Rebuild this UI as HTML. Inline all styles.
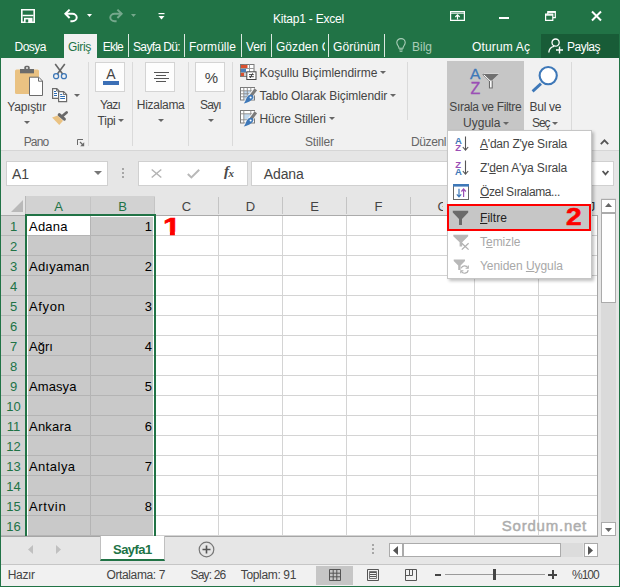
<!DOCTYPE html>
<html lang="tr"><head>
<meta charset="utf-8">
<title>Kitap1 - Excel</title>
<style>
html,body{margin:0;padding:0;}
body{width:620px;height:587px;position:relative;overflow:hidden;background:#217346;font-family:"Liberation Sans",sans-serif;font-size:12px;color:#444;}
.a{position:absolute;}
.t{position:absolute;white-space:nowrap;font-size:12px;color:#444;}
.w{color:#fff;}
.g{color:#666;}
svg{position:absolute;overflow:visible;}
.sep{position:absolute;top:34px;height:23px;width:1px;background:#dbe8e0;}
.gsep{position:absolute;top:62px;height:84px;width:1px;background:#dadada;}
.bigbox{position:absolute;top:62px;width:28px;height:28px;background:#fdfdfd;border:1px solid #d4d4d4;}
.arr{position:absolute;width:0;height:0;border-left:3px solid transparent;border-right:3px solid transparent;border-top:3px solid #666;}
.ch{position:absolute;top:197px;height:17px;background:#e6e6e6;}
.cell{position:absolute;}
.hl{left:26px;width:571px;height:1px;background:#d4d4d4;}
.hls{left:28px;width:125px;height:1px;background:#b4b4b4;}
.vl{top:216px;width:1px;height:320px;background:#d4d4d4;}
.hd{font-size:13px;text-align:center;line-height:15px;}
.c{font-size:13px;color:#000;}
.mi{font-size:9.5px;font-weight:bold;line-height:10px;}
u{text-decoration:underline;}
</style>
</head>
<body>
<!-- title + tabs -->
<div class="a" style="left:0;top:0;width:620px;height:58px;background:#217346;"></div>
<div class="a" style="left:64px;top:34px;width:33px;height:24px;background:#f1f1f1;"></div>
<div class="a" style="left:541px;top:34px;width:78px;height:24px;background:#185c37;"></div>
<span class="t w" style="letter-spacing: -0.22px; left: 273px; top: 12.8px; line-height: 12px;">Kitap1 - Excel</span>
<span class="t w" style="letter-spacing: -0.5px; left: 14.5px; top: 40.8px; line-height: 12px;">Dosya</span>
<span class="t" style="color: rgb(33, 115, 70); letter-spacing: -0.37px; left: 68px; top: 40.8px; line-height: 12px;">Giriş</span>
<span class="t w" style="letter-spacing: -0.76px; left: 102.7px; top: 40.8px; line-height: 12px;">Ekle</span>
<span class="t w" style="letter-spacing: -0.63px; left: 133px; top: 40.8px; line-height: 12px;">Sayfa Dü:</span>
<span class="t w" style="letter-spacing: 0.04px; left: 189px; top: 40.8px; line-height: 12px;">Formülle</span>
<span class="t w" style="letter-spacing: -0.17px; left: 246px; top: 40.8px; line-height: 12px;">Veri</span>
<span class="a" style="left:276px;top:36px;width:49px;height:20px;overflow:hidden;"><span class="t w" style="letter-spacing: 0.04px; left: 0px; top: 4.8px; line-height: 12px;">Gözden G</span></span>
<span class="a" style="left:333px;top:36px;width:47px;height:20px;overflow:hidden;"><span class="t w" style="letter-spacing: 0.07px; left: 0px; top: 4.8px; line-height: 12px;">Görünüm</span></span>
<span class="t" style="color: rgb(169, 205, 184); letter-spacing: 0px; left: 412px; top: 40.8px; line-height: 12px;">Bilg</span>
<span class="t w" style="letter-spacing: 0.15px; left: 472px; top: 40.8px; line-height: 12px;">Oturum Aç</span>
<span class="t w" style="letter-spacing: -0.51px; left: 567px; top: 40.8px; line-height: 12px;">Paylaş</span>
<div class="sep" style="left:128px"></div>
<div class="sep" style="left:184px"></div>
<div class="sep" style="left:241px"></div>
<div class="sep" style="left:271px"></div>
<div class="sep" style="left:328px"></div>
<div class="sep" style="left:384px"></div>

<!-- title icons -->
<svg style="left:21px;top:9px" width="14" height="14" viewBox="0 0 14 14"><path d="M0.800 0.800H13.200V13.200H0.800Z" fill="none" stroke="#fff" stroke-width="1.600"></path><path d="M1.500 6.500H12.500" stroke="#fff" stroke-width="1.500"></path><rect x="3" y="8.800" width="8.500" height="4.400" fill="#fff"></rect><rect x="4.600" y="10.400" width="2.600" height="3" fill="#217346"></rect></svg>
<svg style="left:64px;top:9px" width="15" height="13" viewBox="0 0 15 13"><path d="M1.400 4.800H8.400A4.300 3.700 0 0 1 8.400 12.200H6.400" fill="none" stroke="#fff" stroke-width="2"></path><path d="M5.600 0.600L1.400 4.800L5.600 9" fill="none" stroke="#fff" stroke-width="2"></path></svg>
<svg style="left:87px;top:14px" width="5" height="3" viewBox="0 0 5 3"><path d="M0 0H5L2.5 3Z" fill="#fff"></path></svg>
<svg style="left:108px;top:9px" width="15" height="13" viewBox="0 0 15 13"><g transform="translate(15,0) scale(-1,1)" opacity="0.38"><path d="M1.400 4.800H8.400A4.300 3.700 0 0 1 8.400 12.200H6.400" fill="none" stroke="#fff" stroke-width="2"></path><path d="M5.600 0.600L1.400 4.800L5.600 9" fill="none" stroke="#fff" stroke-width="2"></path></g></svg>
<svg style="left:131px;top:14px" width="5" height="3" viewBox="0 0 5 3"><path d="M0 0H5L2.5 3Z" fill="#fff" opacity="0.38"></path></svg>
<svg style="left:158px;top:13px" width="7" height="7" viewBox="0 0 7 7"><path d="M0.5 0.6H6.5" stroke="#fff" stroke-width="1.2"></path><path d="M0.5 3H6.5L3.5 6.5Z" fill="#fff"></path></svg>
<svg style="left:450px;top:11px" width="15" height="10" viewBox="0 0 15 10"><path d="M0.6 0.6H14.4V9.4H0.6Z" fill="none" stroke="#fff" stroke-width="1.2"></path><path d="M0.6 2.2H14.4" stroke="#fff" stroke-width="1"></path><path d="M7.5 8.5V4M5.3 6L7.5 3.8L9.7 6" fill="none" stroke="#fff" stroke-width="1.2"></path></svg>
<div class="a" style="left:499px;top:17px;width:10px;height:2px;background:#fff;"></div>
<svg style="left:545px;top:11px" width="11" height="10" viewBox="0 0 11 10"><path d="M0.6 3.2H7.8V9.4H0.6Z" fill="none" stroke="#fff" stroke-width="1.2"></path><path d="M0.6 4H7.8" stroke="#fff" stroke-width="1.4"></path><path d="M2.8 3V0.7H10.3V6.6H8" fill="none" stroke="#fff" stroke-width="1.2"></path><path d="M2.8 1.3H10.3" stroke="#fff" stroke-width="1.2"></path></svg>
<svg style="left:591px;top:11px" width="11" height="10" viewBox="0 0 11 10"><path d="M1 0.5L10 9.5M10 0.5L1 9.5" stroke="#fff" stroke-width="2"></path></svg>
<svg style="left:396px;top:38px" width="10" height="14" viewBox="0 0 10 14"><path d="M3 10.2C3 8.2 0.8 7.2 0.8 4.6A4.2 4 0 0 1 9.2 4.6C9.2 7.2 7 8.2 7 10.2Z" fill="none" stroke="#a9cdb8" stroke-width="1.1"></path><path d="M3.2 11.8H6.8M3.6 13.3H6.4" stroke="#a9cdb8" stroke-width="1"></path></svg>
<svg style="left:548px;top:38px" width="16" height="16" viewBox="0 0 16 16"><circle cx="7.6" cy="4.6" r="3.6" fill="none" stroke="#fff" stroke-width="1.3"></circle><path d="M0.8 14.5C1.2 10.5 4 8.7 6.2 8.4" fill="none" stroke="#fff" stroke-width="1.3"></path><path d="M11.5 8.5V15.5M8 12H15" stroke="#fff" stroke-width="1.4"></path></svg>

<!-- ribbon -->
<div class="a" id="ribbon" style="left:1px;top:58px;width:618px;height:92px;background:#f1f1f1;"></div>
<div class="a" style="left:1px;top:150px;width:618px;height:1px;background:#d6d6d6;"></div>
<div class="gsep" style="left:88px"></div>
<div class="gsep" style="left:132px"></div>
<div class="gsep" style="left:188px"></div>
<div class="gsep" style="left:232px"></div>
<div class="gsep" style="left:407px;height:58px"></div>
<div class="gsep" style="left:571px"></div>
<div class="a" style="left:447px;top:61px;width:77px;height:72px;background:#c6c6c6;"></div>
<div class="bigbox" style="left:95px"></div>
<div class="bigbox" style="left:145px"></div>
<div class="bigbox" style="left:195px"></div>
<span class="t" style="letter-spacing: -0.22px; left: 7.3px; top: 100.8px; line-height: 12px;">Yapıştır</span>
<span class="t g" style="letter-spacing: -0.83px; left: 23.7px; top: 135.8px; line-height: 12px;">Pano</span>
<span class="t" style="letter-spacing: -0.78px; left: 100px; top: 98.8px; line-height: 12px;">Yazı</span>
<span class="t" style="letter-spacing: -0.2px; left: 97.5px; top: 114.8px; line-height: 12px;">Tipi</span>
<span class="t" style="letter-spacing: -0.29px; left: 136.8px; top: 98.8px; line-height: 12px;">Hizalama</span>
<span class="t" style="letter-spacing: -0.85px; left: 200px; top: 98.8px; line-height: 12px;">Sayı</span>
<span class="t" style="letter-spacing: -0.01px; left: 259.5px; top: 66.8px; line-height: 12px;">Koşullu Biçimlendirme</span>
<span class="t" style="letter-spacing: -0.07px; left: 259.5px; top: 89.8px; line-height: 12px;">Tablo Olarak Biçimlendir</span>
<span class="t" style="letter-spacing: -0.12px; left: 259.5px; top: 112.8px; line-height: 12px;">Hücre Stilleri</span>
<span class="t g" style="letter-spacing: -0.15px; left: 305px; top: 135.8px; line-height: 12px;">Stiller</span>
<span class="t g" style="letter-spacing: -0.39px; left: 411px; top: 135.8px; line-height: 12px;">Düzenl</span>
<span class="t" style="letter-spacing: -0.33px; left: 449.3px; top: 100.8px; line-height: 12px;">Sırala ve Filtre</span>
<span class="t" style="letter-spacing: 0.02px; left: 463px; top: 116.8px; line-height: 12px;">Uygula</span>
<span class="t" style="letter-spacing: -0.29px; left: 529.6px; top: 100.8px; line-height: 12px;">Bul ve</span>
<span class="t" style="letter-spacing: -1.06px; left: 532px; top: 116.8px; line-height: 12px;">Seç</span>
<div class="arr" style="left:24px;top:121px"></div>
<div class="arr" style="left:118px;top:119px"></div>
<div class="arr" style="left:158px;top:119px"></div>
<div class="arr" style="left:208px;top:119px"></div>
<div class="arr" style="left:380px;top:71px"></div>
<div class="arr" style="left:390px;top:94px"></div>
<div class="arr" style="left:329px;top:117px"></div>
<div class="arr" style="left:503px;top:122px"></div>
<div class="arr" style="left:552px;top:122px"></div>
<div class="arr" style="left:74px;top:94px"></div>

<!-- ribbon icons: clipboard group -->
<svg style="left:14px;top:65px" width="30" height="32" viewBox="0 0 30 32">
<rect x="1" y="4.500" width="24" height="24.500" rx="1.500" fill="#eac282"></rect>
<rect x="6" y="4" width="14" height="4.300" fill="#6b6b6b"></rect>
<path d="M10.300 4.500V2.500Q10.300 0.800 12 0.800H14Q15.700 0.800 15.700 2.500V4.500Z" fill="#6b6b6b"></path>
<rect x="12" y="2.200" width="2" height="1.600" fill="#e0e0e0"></rect>
<path d="M15.500 12.200H24.800L28.500 16V30.500H15.500Z" fill="#fff" stroke="#6b6b6b" stroke-width="1"></path>
<path d="M24.500 12.500V16.200H28.300" fill="none" stroke="#6b6b6b" stroke-width="1"></path>
</svg>
<svg style="left:52px;top:63px" width="16" height="17" viewBox="0 0 16 17">
<path d="M3.200 1L10.800 11.200M12.800 1L5.200 11.200" stroke="#666" stroke-width="1.600" fill="none"></path>
<circle cx="4.100" cy="13.200" r="2.500" fill="none" stroke="#3e78b8" stroke-width="1.300"></circle>
<circle cx="11.900" cy="13.200" r="2.500" fill="none" stroke="#3e78b8" stroke-width="1.300"></circle>
</svg>
<svg style="left:52px;top:88px" width="16" height="15" viewBox="0 0 16 15">
<path d="M0.600 0.600H4.800L7 2.800V10.400H0.600Z" fill="#fff" stroke="#6b6b6b" stroke-width="1.200"></path>
<path d="M4.600 0.800V3H6.800" fill="none" stroke="#6b6b6b" stroke-width="1"></path>
<path d="M2 3.500H4M2 5.500H5M2 7.500H5" stroke="#2e6db4" stroke-width="1"></path>
<path d="M6.600 3.600H11.600L14.600 6.400V13.600H6.600Z" fill="#fff" stroke="#6b6b6b" stroke-width="1.200"></path>
<path d="M11.400 3.800V6.600H14.400" fill="none" stroke="#6b6b6b" stroke-width="1"></path>
<path d="M8.200 6.500H10.200M8.200 8.500H13M8.200 10.500H13" stroke="#2e6db4" stroke-width="1"></path>
</svg>
<svg style="left:52px;top:110px" width="17" height="16" viewBox="0 0 17 16">
<path d="M0.100 7.400L5.600 5.500L11 10.800L7.300 14.900Z" fill="#eac282"></path>
<path d="M7.300 4.700L12.300 9.100" stroke="#696969" stroke-width="3.200" stroke-linecap="round" fill="none"></path>
<path d="M10.500 6L14.600 2.500" stroke="#696969" stroke-width="2.800" stroke-linecap="round" fill="none"></path>
</svg>

<svg style="left:77px;top:139px" width="8" height="8" viewBox="0 0 8 8"><path d="M0.500 6V0.500H6" fill="none" stroke="#6a6a6a" stroke-width="1"></path><path d="M3 3L6 6" stroke="#6a6a6a" stroke-width="1.200" fill="none"></path><path d="M7.200 3.200V7.200H3.200Z" fill="#6a6a6a"></path></svg>
<!-- ribbon icons: font/align/number -->
<span class="t" style="left:105.500px;top:66px;font-size:14px;line-height:16px;color:#444;width:11px;text-align:center">A</span>
<div class="a" style="left:103px;top:81px;width:16px;height:4px;background:#3b6fb6;"></div>
<div class="a" style="left:154px;top:72px;width:15px;height:1px;background:#555;"></div>
<div class="a" style="left:156px;top:75px;width:10px;height:1px;background:#555;"></div>
<div class="a" style="left:154px;top:78px;width:15px;height:1px;background:#555;"></div>
<div class="a" style="left:156px;top:81px;width:10px;height:1px;background:#555;"></div>
<span class="t" style="left:204px;top:69px;font-size:15px;line-height:17px;color:#444;width:15px;text-align:center;letter-spacing:0">%</span>

<!-- ribbon icons: styles -->
<svg style="left:240px;top:64px" width="17" height="16" viewBox="0 0 17 16">
<rect x="0.500" y="0.500" width="13.500" height="12" fill="#fff" stroke="#7a7a7a" stroke-width="1"></rect>
<path d="M0.500 4.500H14M0.500 8.500H14M5 0.500V12.500M9.500 0.500V12.500" stroke="#9a9a9a" stroke-width="1" fill="none"></path>
<rect x="1" y="1" width="6.500" height="3" fill="#d9502f"></rect>
<rect x="1" y="5" width="5" height="3" fill="#4a7ebb"></rect>
<rect x="1" y="9" width="3" height="3" fill="#d9502f"></rect>
<rect x="6.800" y="7.800" width="9.200" height="7.700" fill="#fff" stroke="#444" stroke-width="1"></rect>
<path d="M9 10.600H13.800M9 12.700H13.800M12.600 9.300L10.200 14" stroke="#333" stroke-width="0.900" fill="none"></path>
</svg>
<svg style="left:240px;top:87px" width="17" height="17" viewBox="0 0 17 17">
<rect x="0.500" y="0.500" width="14" height="12.500" fill="#fff" stroke="#7a7a7a" stroke-width="1"></rect>
<rect x="4" y="4" width="10" height="8.500" fill="#c3d9ee"></rect>
<path d="M0.500 3.800H14.500M0.500 6.800H14.500M0.500 9.800H14.500M3.800 0.500V13M7.300 0.500V13M10.800 0.500V13" stroke="#8a8a8a" stroke-width="0.900" fill="none"></path>
<path d="M8 8L14 1L17.500 3.500L13.500 10L7 17.500H2Z" fill="#f1f1f1"></path>
<path d="M15.800 2.400L11.200 8.600" stroke="#7a7a7a" stroke-width="3.200" fill="none"></path><path d="M13.200 9C14 12.500 9.500 15.200 3.800 16.400C6 14 6 10.800 8.400 8.600C9.800 7.400 12.600 7.600 13.200 9Z" fill="#3e78b8"></path><circle cx="10.600" cy="10.600" r="1" fill="#fff"></circle>
</svg>
<svg style="left:240px;top:110px" width="17" height="17" viewBox="0 0 17 17">
<rect x="0.500" y="0.500" width="14" height="12.500" fill="#fff" stroke="#7a7a7a" stroke-width="1"></rect>
<rect x="4" y="4" width="7" height="5.500" fill="#c3d9ee"></rect>
<path d="M0.500 3.800H14.500M0.500 9.800H14.500M3.800 0.500V13M10.800 0.500V13" stroke="#8a8a8a" stroke-width="0.900" fill="none"></path>
<path d="M8 8L14 1L17.500 3.500L13.500 10L7 17.500H2Z" fill="#f1f1f1"></path>
<path d="M15.800 2.400L11.200 8.600" stroke="#7a7a7a" stroke-width="3.200" fill="none"></path><path d="M13.200 9C14 12.500 9.500 15.200 3.800 16.400C6 14 6 10.800 8.400 8.600C9.800 7.400 12.600 7.600 13.200 9Z" fill="#3e78b8"></path><circle cx="10.600" cy="10.600" r="1" fill="#fff"></circle>
</svg>

<!-- ribbon icons: editing -->
<span class="t" style="left:470px;top:65px;font-size:15.500px;line-height:18px;color:#3e78b8;-webkit-text-stroke:0.3px #3e78b8;">A</span>
<span class="t" style="left:470.500px;top:79.500px;font-size:16px;line-height:18px;color:#9b4fb5;-webkit-text-stroke:0.3px #9b4fb5;">Z</span>
<svg style="left:482px;top:73px" width="18" height="16" viewBox="0 0 18 16">
<path d="M0.500 0.800H17L10.200 7.400V15.200H7.200V7.400Z" fill="#fff"></path>
<path d="M1.200 1H16.800L10 7.600H8Z" fill="#707070"></path>
<path d="M0.800 1L7.500 7.600V15H10.200V7.600" fill="none" stroke="#6a6a6a" stroke-width="1.100"></path>
<path d="M1.800 1.800L8 7.800" stroke="#fff" stroke-width="1" fill="none"></path>
</svg>
<svg style="left:530px;top:64px" width="30" height="30" viewBox="0 0 30 30">
<path d="M11 19.600L2.600 27.400" stroke="#3e78b8" stroke-width="2.800" fill="none"></path>
<circle cx="18.200" cy="11.600" r="8.600" fill="#fff" stroke="#3e78b8" stroke-width="2.100"></circle>
</svg>

<!-- formula bar -->
<div class="a" id="fbar" style="left:1px;top:151px;width:618px;height:45px;background:#e6e6e6;"></div>
<div class="a" style="left:6px;top:161px;width:100px;height:23px;background:#fff;border:1px solid #d0d0d0;"></div>
<span class="t" style="font-size: 14px; color: rgb(68, 68, 68); letter-spacing: -0.06px; left: 12px; top: 166.6px; line-height: 14px;">A1</span>
<div class="arr" style="left:94px;top:171px;border-top-color:#777;border-left-width:4px;border-right-width:4px;border-top-width:4px"></div>
<div class="a" style="left:122px;top:168px;width:2px;height:2px;background:#a6a6a6;box-shadow:0 4px 0 #a6a6a6,0 8px 0 #a6a6a6;"></div>
<div class="a" style="left:138px;top:161px;width:108px;height:23px;background:#fff;border:1px solid #d0d0d0;"></div>
<svg style="left:151px;top:169px" width="11" height="9" viewBox="0 0 11 9"><path d="M0.700 0.500L10.300 8.500M10.300 0.500L0.700 8.500" stroke="#b4b4b4" stroke-width="1.500" fill="none"></path></svg>
<svg style="left:187px;top:169px" width="13" height="10" viewBox="0 0 13 10"><path d="M0.800 5L4.400 8.400L12.200 0.800" stroke="#b8b8b8" stroke-width="2" fill="none"></path></svg>
<span class="t" style="left:224px;top:163px;font-family:'Liberation Serif',serif;font-style:italic;font-weight:bold;font-size:15px;line-height:17px;color:#4a4a4a;letter-spacing:-0.5px">f<span style="font-size:11px;position:relative;top:1px">x</span></span>
<div class="a" style="left:251px;top:161px;width:361px;height:23px;background:#fff;border:1px solid #d0d0d0;"></div>
<span class="t" style="font-size: 14px; color: rgb(68, 68, 68); letter-spacing: -0.08px; left: 263.7px; top: 166.6px; line-height: 14px;">Adana</span>
<svg style="left:602px;top:170px" width="7" height="6" viewBox="0 0 7 6"><path d="M0.600 1L3.500 4.400L6.400 1" stroke="#555" stroke-width="1.800" fill="none"></path></svg>
<!-- collapse caret -->
<svg style="left:600px;top:139px" width="9" height="6" viewBox="0 0 9 6"><path d="M0.800 5.200L4.500 1.300L8.200 5.200" stroke="#555" stroke-width="1.800" fill="none"></path></svg>

<!-- grid -->
<div class="a" id="grid" style="left:1px;top:196px;width:597px;height:340px;background:#fff;"></div>
<!--GRID-->
<div class="a" style="left:1px;top:196px;width:597px;height:19px;background:#e6e6e6;"></div>
<div class="a" style="left:26px;top:196px;width:129px;height:18px;background:#d2d2d2;"></div>
<div class="a" style="left:1px;top:215px;width:25px;height:321px;background:#d2d2d2;"></div>
<svg style="left:11px;top:200px" width="12" height="12" viewBox="0 0 12 12"><path d="M12 0V12H0Z" fill="#b9b9b9"></path></svg>
<div class="a" style="left:28px;top:217px;width:125px;height:319px;background:#c9c9c9;"></div>
<div class="a" style="left:27px;top:216px;width:63px;height:19px;background:#fff;"></div>
<div class="a hl" style="top:235px"></div>
<div class="a hls" style="top:235px"></div>
<div class="a hl" style="top:255px"></div>
<div class="a hls" style="top:255px"></div>
<div class="a hl" style="top:275px"></div>
<div class="a hls" style="top:275px"></div>
<div class="a hl" style="top:295px"></div>
<div class="a hls" style="top:295px"></div>
<div class="a hl" style="top:315px"></div>
<div class="a hls" style="top:315px"></div>
<div class="a hl" style="top:335px"></div>
<div class="a hls" style="top:335px"></div>
<div class="a hl" style="top:355px"></div>
<div class="a hls" style="top:355px"></div>
<div class="a hl" style="top:375px"></div>
<div class="a hls" style="top:375px"></div>
<div class="a hl" style="top:395px"></div>
<div class="a hls" style="top:395px"></div>
<div class="a hl" style="top:415px"></div>
<div class="a hls" style="top:415px"></div>
<div class="a hl" style="top:435px"></div>
<div class="a hls" style="top:435px"></div>
<div class="a hl" style="top:455px"></div>
<div class="a hls" style="top:455px"></div>
<div class="a hl" style="top:475px"></div>
<div class="a hls" style="top:475px"></div>
<div class="a hl" style="top:495px"></div>
<div class="a hls" style="top:495px"></div>
<div class="a hl" style="top:515px"></div>
<div class="a hls" style="top:515px"></div>
<div class="a hl" style="top:535px"></div>
<div class="a hls" style="top:535px"></div>
<div class="a vl" style="left:218px"></div>
<div class="a vl" style="left:282px"></div>
<div class="a vl" style="left:346px"></div>
<div class="a vl" style="left:410px"></div>
<div class="a vl" style="left:474px"></div>
<div class="a vl" style="left:538px"></div>
<div class="a vl" style="left:602px"></div>
<div class="a" style="left:90px;top:216px;width:1px;height:320px;background:#b4b4b4;"></div>
<div class="a" style="left:90px;top:197px;width:1px;height:17px;background:#c4c4c4;"></div>
<div class="a" style="left:154px;top:197px;width:1px;height:17px;background:#c4c4c4;"></div>
<div class="a" style="left:218px;top:197px;width:1px;height:17px;background:#c4c4c4;"></div>
<div class="a" style="left:282px;top:197px;width:1px;height:17px;background:#c4c4c4;"></div>
<div class="a" style="left:346px;top:197px;width:1px;height:17px;background:#c4c4c4;"></div>
<div class="a" style="left:410px;top:197px;width:1px;height:17px;background:#c4c4c4;"></div>
<div class="a" style="left:474px;top:197px;width:1px;height:17px;background:#c4c4c4;"></div>
<div class="a" style="left:538px;top:197px;width:1px;height:17px;background:#c4c4c4;"></div>
<div class="a" style="left:1px;top:215px;width:597px;height:1px;background:#ababab;"></div>
<div class="a" style="left:1px;top:235px;width:24px;height:1px;background:#b8b8b8;"></div>
<div class="a" style="left:1px;top:255px;width:24px;height:1px;background:#b8b8b8;"></div>
<div class="a" style="left:1px;top:275px;width:24px;height:1px;background:#b8b8b8;"></div>
<div class="a" style="left:1px;top:295px;width:24px;height:1px;background:#b8b8b8;"></div>
<div class="a" style="left:1px;top:315px;width:24px;height:1px;background:#b8b8b8;"></div>
<div class="a" style="left:1px;top:335px;width:24px;height:1px;background:#b8b8b8;"></div>
<div class="a" style="left:1px;top:355px;width:24px;height:1px;background:#b8b8b8;"></div>
<div class="a" style="left:1px;top:375px;width:24px;height:1px;background:#b8b8b8;"></div>
<div class="a" style="left:1px;top:395px;width:24px;height:1px;background:#b8b8b8;"></div>
<div class="a" style="left:1px;top:415px;width:24px;height:1px;background:#b8b8b8;"></div>
<div class="a" style="left:1px;top:435px;width:24px;height:1px;background:#b8b8b8;"></div>
<div class="a" style="left:1px;top:455px;width:24px;height:1px;background:#b8b8b8;"></div>
<div class="a" style="left:1px;top:475px;width:24px;height:1px;background:#b8b8b8;"></div>
<div class="a" style="left:1px;top:495px;width:24px;height:1px;background:#b8b8b8;"></div>
<div class="a" style="left:1px;top:515px;width:24px;height:1px;background:#b8b8b8;"></div>
<div class="a" style="left:1px;top:535px;width:24px;height:1px;background:#b8b8b8;"></div>
<div class="a" style="left:25px;top:214px;width:131px;height:2px;background:#217346;"></div>
<div class="a" style="left:25px;top:214px;width:2px;height:322px;background:#217346;"></div>
<div class="a" style="left:154px;top:214px;width:2px;height:322px;background:#217346;"></div>
<span class="t hd" style="left:48.5px;top:199px;width:20px;color:#217346">A</span>
<span class="t hd" style="left:112.5px;top:199px;width:20px;color:#217346">B</span>
<span class="t hd" style="left:176.5px;top:199px;width:20px;color:#444">C</span>
<span class="t hd" style="left:240.5px;top:199px;width:20px;color:#444">D</span>
<span class="t hd" style="left:304.5px;top:199px;width:20px;color:#444">E</span>
<span class="t hd" style="left:368.5px;top:199px;width:20px;color:#444">F</span>
<span class="t hd" style="left:432.5px;top:199px;width:20px;color:#444;clip-path:inset(0 9.5px 0 0)">G</span>
<span class="t hd" style="left:496.5px;top:199px;width:20px;color:#444">H</span>
<span class="t hd" style="left:2px;top:219.0px;width:23px;color:#217346">1</span>
<span class="t hd" style="left:2px;top:239.0px;width:23px;color:#217346">2</span>
<span class="t hd" style="left:2px;top:259.0px;width:23px;color:#217346">3</span>
<span class="t hd" style="left:2px;top:279.0px;width:23px;color:#217346">4</span>
<span class="t hd" style="left:2px;top:299.0px;width:23px;color:#217346">5</span>
<span class="t hd" style="left:2px;top:319.0px;width:23px;color:#217346">6</span>
<span class="t hd" style="left:2px;top:339.0px;width:23px;color:#217346">7</span>
<span class="t hd" style="left:2px;top:359.0px;width:23px;color:#217346">8</span>
<span class="t hd" style="left:2px;top:379.0px;width:23px;color:#217346">9</span>
<span class="t hd" style="left:2px;top:399.0px;width:23px;color:#217346">10</span>
<span class="t hd" style="left:2px;top:419.0px;width:23px;color:#217346">11</span>
<span class="t hd" style="left:2px;top:439.0px;width:23px;color:#217346">12</span>
<span class="t hd" style="left:2px;top:459.0px;width:23px;color:#217346">13</span>
<span class="t hd" style="left:2px;top:479.0px;width:23px;color:#217346">14</span>
<span class="t hd" style="left:2px;top:499.0px;width:23px;color:#217346">15</span>
<span class="t hd" style="left:2px;top:519.0px;width:23px;color:#217346">16</span>
<span class="t c" style="letter-spacing: 0.22px; left: 29px; top: 219.5px; line-height: 13px;">Adana</span>
<span class="t c" style="left:120px;width:32px;text-align:right;top:219.5px;line-height:13px">1</span>
<span class="t c" style="letter-spacing: 0.23px; left: 29px; top: 259.5px; line-height: 13px;">Adıyaman</span>
<span class="t c" style="left:120px;width:32px;text-align:right;top:259.5px;line-height:13px">2</span>
<span class="t c" style="letter-spacing: 0.63px; left: 29px; top: 299.5px; line-height: 13px;">Afyon</span>
<span class="t c" style="left:120px;width:32px;text-align:right;top:299.5px;line-height:13px">3</span>
<span class="t c" style="letter-spacing: -0.01px; left: 29px; top: 339.5px; line-height: 13px;">Ağrı</span>
<span class="t c" style="left:120px;width:32px;text-align:right;top:339.5px;line-height:13px">4</span>
<span class="t c" style="letter-spacing: 0.09px; left: 29px; top: 379.5px; line-height: 13px;">Amasya</span>
<span class="t c" style="left:120px;width:32px;text-align:right;top:379.5px;line-height:13px">5</span>
<span class="t c" style="letter-spacing: 0.23px; left: 29px; top: 419.5px; line-height: 13px;">Ankara</span>
<span class="t c" style="left:120px;width:32px;text-align:right;top:419.5px;line-height:13px">6</span>
<span class="t c" style="letter-spacing: 0.45px; left: 29px; top: 459.5px; line-height: 13px;">Antalya</span>
<span class="t c" style="left:120px;width:32px;text-align:right;top:459.5px;line-height:13px">7</span>
<span class="t c" style="letter-spacing: 0.68px; left: 29px; top: 499.5px; line-height: 13px;">Artvin</span>
<span class="t c" style="left:120px;width:32px;text-align:right;top:499.5px;line-height:13px">8</span>
<span class="t hd" style="left:582px;top:199px;width:20px;color:#333">J</span>
<div class="a" style="left:597px;top:215px;width:1px;height:322px;background:#a6a6a6;"></div>
<div class="a" style="left:25px;top:196px;width:1px;height:18px;background:#b8b8b8;"></div>
<!--/GRID-->

<!-- bottom -->
<!-- vertical scrollbar -->
<div class="a" style="left:598px;top:196px;width:21px;height:340px;background:#e6e6e6;"></div>
<div class="a" style="left:601px;top:198px;width:15px;height:338px;background:#dadada;"></div>
<div class="a" style="left:601px;top:199px;width:13px;height:12px;background:#fff;border:1px solid #ababab;"></div>
<svg style="left:605px;top:203px" width="7" height="4" viewBox="0 0 7 4"><path d="M0 4L3.500 0L7 4Z" fill="#666"></path></svg>
<div class="a" style="left:601px;top:213px;width:13px;height:88px;background:#fff;border:1px solid #ababab;"></div>
<div class="a" style="left:601px;top:522px;width:13px;height:12px;background:#fff;border:1px solid #ababab;"></div>
<svg style="left:605px;top:528px" width="7" height="4" viewBox="0 0 7 4"><path d="M0 0L3.500 4L7 0Z" fill="#666"></path></svg>
<!-- sheet tab bar -->
<div class="a" style="left:1px;top:536px;width:618px;height:29px;background:#e6e6e6;"></div>
<div class="a" style="left:1px;top:536px;width:597px;height:1px;background:#a6a6a6;"></div>
<svg style="left:28px;top:545px" width="5" height="9" viewBox="0 0 5 9"><path d="M5 0L0 4.5L5 9Z" fill="#c0c0c0"></path></svg>
<svg style="left:56px;top:545px" width="5" height="9" viewBox="0 0 5 9"><path d="M0 0L5 4.5L0 9Z" fill="#c0c0c0"></path></svg>
<div class="a" style="left:100px;top:536px;width:63px;height:23px;background:#fff;border-bottom:2px solid #217346;border-left:1px solid #c0c0c0;border-right:1px solid #c0c0c0;"></div>
<span class="t" style="font-size: 13px; font-weight: bold; color: rgb(33, 115, 70); letter-spacing: -0.54px; left: 113px; top: 543px; line-height: 13px;">Sayfa1</span>
<svg style="left:198px;top:541px" width="17" height="17" viewBox="0 0 17 17"><circle cx="8.5" cy="8.5" r="7.3" fill="none" stroke="#777" stroke-width="1.2"></circle><path d="M8.5 4.5V12.5M4.5 8.5H12.5" stroke="#555" stroke-width="1.6"></path></svg>
<div class="a" style="left:372px;top:544px;width:2px;height:2px;background:#a6a6a6;box-shadow:0 4px 0 #a6a6a6,0 8px 0 #a6a6a6;"></div>
<!-- h scrollbar -->
<div class="a" style="left:389px;top:543px;width:12px;height:12px;background:#fff;border:1px solid #ababab;"></div>
<svg style="left:393px;top:546px" width="5" height="9" viewBox="0 0 5 9"><path d="M5 0L0 4.5L5 9Z" fill="#555"></path></svg>
<div class="a" style="left:403px;top:543px;width:156px;height:12px;background:#fff;border:1px solid #ababab;"></div>
<div class="a" style="left:561px;top:543px;width:22px;height:14px;background:#dcdcdc;"></div>
<div class="a" style="left:584px;top:543px;width:12px;height:12px;background:#fff;border:1px solid #ababab;"></div>
<svg style="left:588px;top:546px" width="5" height="9" viewBox="0 0 5 9"><path d="M0 0L5 4.5L0 9Z" fill="#555"></path></svg>
<!-- status bar -->
<div class="a" style="left:1px;top:565px;width:618px;height:21px;background:#f1f1f1;"></div>
<div class="a" style="left:1px;top:564px;width:618px;height:1px;background:#c6c6c6;"></div>
<div class="a" style="left:316px;top:566px;width:37px;height:19px;background:#c6c6c6;"></div>
<span class="t" style="font-size: 12px; letter-spacing: -0.37px; left: 7.8px; top: 568.8px; line-height: 12px;">Hazır</span>
<span class="t" style="font-size: 12px; letter-spacing: -0.38px; left: 106.5px; top: 568.8px; line-height: 12px;">Ortalama: 7</span>
<span class="t" style="font-size: 12px; letter-spacing: -0.84px; left: 190.5px; top: 568.8px; line-height: 12px;">Say: 26</span>
<span class="t" style="font-size: 12px; letter-spacing: -0.35px; left: 240.8px; top: 568.8px; line-height: 12px;">Toplam: 91</span>
<span class="t" style="font-size: 12px; letter-spacing: -1px; left: 572px; top: 568.8px; line-height: 12px;">%100</span>
<svg style="left:329px;top:569px" width="12" height="12" viewBox="0 0 12 12"><path d="M0.5 0.5H11.5V11.5H0.5ZM4.2 0.5V11.5M7.8 0.5V11.5M0.5 4.2H11.5M0.5 7.8H11.5" stroke="#555" stroke-width="1" fill="none"></path></svg>
<svg style="left:367px;top:569px" width="12" height="12" viewBox="0 0 12 12"><path d="M0.5 0.5H11.5V11.5H0.5Z" stroke="#555" stroke-width="1" fill="none"></path><path d="M3 3.5H9M3 5.5H9M3 7.5H9" stroke="#555" stroke-width="1" fill="none"></path><path d="M2.5 2.5H9.5V9.5H2.5Z" stroke="#555" stroke-width="0.8" fill="none"></path></svg>
<svg style="left:405px;top:569px" width="12" height="12" viewBox="0 0 12 12"><path d="M0.5 0.5H11.5V11.5H0.5ZM4.5 0.5V6.5H0.5M4.5 6.5H7.5V0.5" stroke="#555" stroke-width="1" fill="none"></path></svg>
<div class="a" style="left:435px;top:574px;width:6px;height:2px;background:#444;"></div>
<div class="a" style="left:445px;top:574px;width:100px;height:1px;background:#9a9a9a;"></div>
<div class="a" style="left:493px;top:569px;width:3px;height:11px;background:#444;"></div>
<div class="a" style="left:548px;top:574px;width:9px;height:2px;background:#444;"></div>
<div class="a" style="left:551.5px;top:570px;width:2px;height:9px;background:#444;"></div>
<span class="t" style="font-size: 15px; color: rgb(173, 173, 173); -webkit-text-stroke: 0.45px rgb(173, 173, 173); letter-spacing: 0.77px; left: 501.8px; top: 518.3px; line-height: 15px;">Sordum.net</span>
<!-- dropdown menu -->
<div class="a" style="left:447px;top:130px;width:143px;height:147px;background:#fff;border:1px solid #c6c6c6;box-shadow:2px 2px 3px rgba(0,0,0,0.25);"></div>
<div class="a" style="left:449px;top:206px;width:140px;height:23px;background:#c6c6c6;"></div>
<div class="a" style="left:447px;top:204px;width:140px;height:23px;border:2px solid #fe0000;"></div>
<span class="t" style="letter-spacing: -0.21px; left: 480px; top: 137.8px; line-height: 12px;"><u>A</u>'dan Z'ye Sırala</span>
<span class="t" style="letter-spacing: -0.18px; left: 480px; top: 161.8px; line-height: 12px;">Z'<u>d</u>en A'ya Sırala</span>
<span class="t" style="letter-spacing: -0.38px; left: 480px; top: 185.8px; line-height: 12px;"><u>Ö</u>zel Sıralama...</span>
<span class="t" style="color: rgb(34, 34, 34); letter-spacing: 0.05px; left: 480px; top: 211.8px; line-height: 12px;"><u>F</u>iltre</span>
<span class="t" style="color: rgb(168, 168, 168); letter-spacing: -0.03px; left: 480px; top: 235.8px; line-height: 12px;">T<u>e</u>mizle</span>
<span class="t" style="color: rgb(168, 168, 168); letter-spacing: -0.05px; left: 480px; top: 259.8px; line-height: 12px;">Yeniden <u>U</u>ygula</span>
<span class="t" style="left:565.800px;top:205px;font-weight:bold;font-size:23px;line-height:24px;color:#fe0000;-webkit-text-stroke:0.6px #fe0000;transform:scaleX(1.22);transform-origin:0 0;">2</span>
<span class="t" style="left:162.700px;top:214.700px;font-weight:bold;font-size:23px;line-height:24px;color:#fe0000;-webkit-text-stroke:0.6px #fe0000;transform:scaleX(1.38);transform-origin:0 0;clip-path:polygon(0 0,100% 0,100% 17px,8.6px 17px,8.6px 100%,5px 100%,5px 17px,0 17px);">1</span>
<!-- menu icons -->
<span class="t mi" style="left:455px;top:135.500px;color:#3e78b8;">A</span>
<span class="t mi" style="left:455.200px;top:143px;color:#9b4fb5;">Z</span>
<svg style="left:462px;top:136px" width="8" height="15" viewBox="0 0 8 15"><path d="M3.500 0.500V14M0.800 11L3.500 14.200L6.200 11" fill="none" stroke="#555" stroke-width="1.100"></path></svg>
<span class="t mi" style="left:455.200px;top:159.500px;color:#9b4fb5;">Z</span>
<span class="t mi" style="left:455px;top:167px;color:#3e78b8;">A</span>
<svg style="left:462px;top:160px" width="8" height="15" viewBox="0 0 8 15"><path d="M3.500 0.500V14M0.800 11L3.500 14.200L6.200 11" fill="none" stroke="#555" stroke-width="1.100"></path></svg>
<svg style="left:453px;top:184px" width="16" height="16" viewBox="0 0 16 16">
<rect x="0.500" y="0.500" width="15" height="15" fill="#fff" stroke="#666" stroke-width="1"></rect>
<rect x="0" y="0" width="16" height="2.600" fill="#3e78b8"></rect>
<path d="M6 4.800V12.500M3.800 10.300L6 12.800L8.200 10.300" fill="none" stroke="#3e78b8" stroke-width="1.200"></path>
<path d="M10.600 13V5.300M8.400 7.500L10.600 5L12.800 7.500" fill="none" stroke="#9b4fb5" stroke-width="1.200"></path>
</svg>
<svg style="left:452px;top:210px" width="17" height="16" viewBox="0 0 17 16"><path d="M0.800 0.800H16.200V2.600L10 9V15H7V9L0.800 2.600Z" fill="#6a6a6a"></path></svg>
<svg style="left:453px;top:234px" width="17" height="17" viewBox="0 0 17 17"><path d="M0.300 0.700H15.200V2.300L9.200 8.200V12.500H6.600V8.200L0.300 2.300Z" fill="#b8b8b8"></path><path d="M8.800 9.200L15.600 15.600M15.600 9.200L8.800 15.600" stroke="#b0b0b0" stroke-width="1.300" fill="none"></path></svg>
<svg style="left:453px;top:259px" width="17" height="17" viewBox="0 0 17 17"><path d="M0.700 0.500H12V2L7.600 6.600V11H5.200V6.600L0.700 2Z" fill="#b8b8b8"></path><path d="M8.200 9.200A3.600 3.600 0 0 1 14.800 8.800M15.200 11.200A3.600 3.600 0 0 1 8.400 12.200" fill="none" stroke="#b0b0b0" stroke-width="1.200"></path><path d="M15.300 6.500V9.300H12.600M7.800 14.300V11.700H10.400" fill="none" stroke="#b0b0b0" stroke-width="1.100"></path></svg>

<!-- window borders -->
<div class="a" style="left:0;top:58px;width:1px;height:529px;background:#217346;"></div>
<div class="a" style="left:619px;top:58px;width:1px;height:529px;background:#217346;"></div>
<div class="a" style="left:0;top:586px;width:620px;height:1px;background:#217346;"></div>


</body></html>
